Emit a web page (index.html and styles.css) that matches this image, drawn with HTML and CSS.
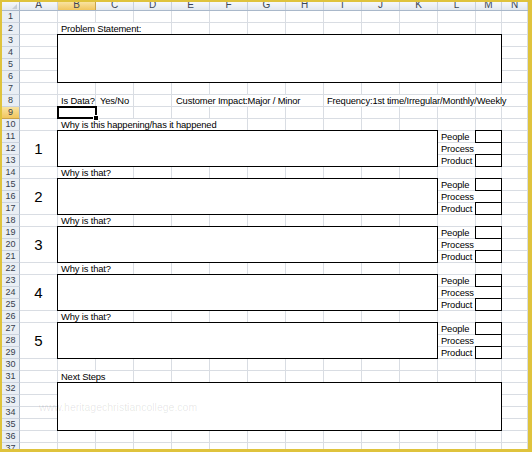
FILE: index.html
```html
<!DOCTYPE html>
<html lang="en">
<head>
    <meta charset="UTF-8">
    <title>5 Whys Worksheet</title>
    <link rel="stylesheet" href="styles.css">
</head>
<body>

<div class="frame">
    <!-- column headers -->
    <div class="colheads">
        <div class="corner"></div>
        <div class="ch">A</div>
        <div class="ch sel">B</div>
        <div class="ch">C</div>
        <div class="ch">D</div>
        <div class="ch">E</div>
        <div class="ch">F</div>
        <div class="ch">G</div>
        <div class="ch">H</div>
        <div class="ch">I</div>
        <div class="ch">J</div>
        <div class="ch">K</div>
        <div class="ch">L</div>
        <div class="ch narrow">M</div>
        <div class="ch narrow">N</div>
    </div>

    <div class="body">
        <!-- row headers -->
        <div class="rowheads">
            <div class="rh">1</div>
            <div class="rh">2</div>
            <div class="rh">3</div>
            <div class="rh">4</div>
            <div class="rh">5</div>
            <div class="rh">6</div>
            <div class="rh">7</div>
            <div class="rh">8</div>
            <div class="rh sel">9</div>
            <div class="rh">10</div>
            <div class="rh">11</div>
            <div class="rh">12</div>
            <div class="rh">13</div>
            <div class="rh">14</div>
            <div class="rh">15</div>
            <div class="rh">16</div>
            <div class="rh">17</div>
            <div class="rh">18</div>
            <div class="rh">19</div>
            <div class="rh">20</div>
            <div class="rh">21</div>
            <div class="rh">22</div>
            <div class="rh">23</div>
            <div class="rh">24</div>
            <div class="rh">25</div>
            <div class="rh">26</div>
            <div class="rh">27</div>
            <div class="rh">28</div>
            <div class="rh">29</div>
            <div class="rh">30</div>
            <div class="rh">31</div>
            <div class="rh">32</div>
            <div class="rh">33</div>
            <div class="rh">34</div>
            <div class="rh">35</div>
            <div class="rh">36</div>
            <div class="rh">37</div>
        </div>

        <div class="cells">
            <!-- rows 1-2 -->
            <div class="band rows-2">
                <div class="label ps-label">Problem Statement:</div>
            </div>

            <!-- rows 3-6 -->
            <div class="band rows-4">
                <div class="box box-full"></div>
            </div>

            <!-- rows 7-9 -->
            <div class="band rows-3">
                <div class="label meta is-data">Is Data?</div>
                <div class="label meta yes-no">Yes/No</div>
                <div class="label meta impact">Customer Impact:Major / Minor</div>
                <div class="label meta freq">Frequency:1st time/Irregular/Monthly/Weekly</div>
                <div class="active"></div>
            </div>

            <!-- rows 10-13 -->
            <div class="band why">
                <div class="label why-label first">Why is this happening/has it happened</div>
                <div class="num">1</div>
                <div class="box box-why"></div>
                <div class="label pp people">People</div>
                <div class="label pp process">Process</div>
                <div class="label pp product">Product</div>
                <div class="chk chk-top"></div>
                <div class="chk-mid"></div>
                <div class="chk chk-bottom"></div>
            </div>

            <!-- rows 14-17 -->
            <div class="band why">
                <div class="label why-label">Why is that?</div>
                <div class="num">2</div>
                <div class="box box-why"></div>
                <div class="label pp people">People</div>
                <div class="label pp process">Process</div>
                <div class="label pp product">Product</div>
                <div class="chk chk-top"></div>
                <div class="chk-mid"></div>
                <div class="chk chk-bottom"></div>
            </div>

            <!-- rows 18-21 -->
            <div class="band why">
                <div class="label why-label">Why is that?</div>
                <div class="num">3</div>
                <div class="box box-why"></div>
                <div class="label pp people">People</div>
                <div class="label pp process">Process</div>
                <div class="label pp product">Product</div>
                <div class="chk chk-top"></div>
                <div class="chk-mid"></div>
                <div class="chk chk-bottom"></div>
            </div>

            <!-- rows 22-25 -->
            <div class="band why">
                <div class="label why-label">Why is that?</div>
                <div class="num">4</div>
                <div class="box box-why"></div>
                <div class="label pp people">People</div>
                <div class="label pp process">Process</div>
                <div class="label pp product">Product</div>
                <div class="chk chk-top"></div>
                <div class="chk-mid"></div>
                <div class="chk chk-bottom"></div>
            </div>

            <!-- rows 26-29 -->
            <div class="band why">
                <div class="label why-label">Why is that?</div>
                <div class="num">5</div>
                <div class="box box-why"></div>
                <div class="label pp people">People</div>
                <div class="label pp process">Process</div>
                <div class="label pp product">Product</div>
                <div class="chk chk-top"></div>
                <div class="chk-mid"></div>
                <div class="chk chk-bottom"></div>
            </div>

            <!-- rows 30-37 -->
            <div class="band rows-8">
                <div class="label next-label">Next Steps</div>
                <div class="box box-next"></div>
            </div>
        </div>
    </div>

    <div class="watermark">www.heritagechristiancollege.com</div>
</div>

</body>
</html>
```

FILE: styles.css
```css
body {
    margin: 0;
    font-family: "Liberation Sans", Arial, sans-serif;
    background-color: #fff;
}
.frame {
    position: relative;
    width: 532px;
    height: 452px;
    box-sizing: border-box;
    border-style: solid;
    border-color: #dfc33c;
    border-width: 2px 4px 3px 2px;
    overflow: hidden;
    background-color: #fff;
}

/* headers */
.colheads {
    display: flex;
    height: 9px;
    box-sizing: border-box;
    border-bottom: 1px solid #a9b8ca;
    background: linear-gradient(#f6f8fa, #e3e8ee);
}
.corner {
    position: relative;
    width: 18px;
    box-sizing: border-box;
    border-right: 1px solid #a9b8ca;
}
.corner::after {
    content: "";
    position: absolute;
    right: 2px;
    bottom: 1px;
    border-style: solid;
    border-width: 0 0 5px 5px;
    border-color: transparent transparent #c8ced6 transparent;
}
.ch {
    width: 38px;
    flex: none;
    box-sizing: border-box;
    border-right: 1px solid #c9d1dc;
    display: flex;
    align-items: flex-end;
    justify-content: center;
    font-size: 10px;
    line-height: 10px;
    color: #3b4656;
}
.ch.narrow {
    width: 26px;
}
.ch.sel {
    background: linear-gradient(#f9e3a0, #f1c65e);
    border-right-color: #c9a24a;
}
.body {
    display: flex;
}
.rowheads {
    width: 18px;
    flex: none;
}
.rh {
    height: 12px;
    box-sizing: border-box;
    border-bottom: 1px solid #cbd3de;
    border-right: 1px solid #a9b8ca;
    background-color: #e9eef4;
    font-size: 9px;
    line-height: 11px;
    text-align: center;
    color: #36404d;
}
.rh.sel {
    background: linear-gradient(#f9e3a0, #f1c65e);
    border-bottom-color: #c9a24a;
}

/* cell area with gridlines */
.cells {
    width: 508px;
    flex: none;
    background-image:
        repeating-linear-gradient(to bottom, transparent 0 11px, #d9dde3 11px 12px),
        repeating-linear-gradient(to right, transparent 0 37px, #d9dde3 37px 38px),
        repeating-linear-gradient(to right, transparent 0 25px, #d9dde3 25px 26px);
    background-size: 100% 100%, 456px 100%, 52px 100%;
    background-position: 0 0, 0 0, 456px 0;
    background-repeat: no-repeat;
}
.band {
    display: grid;
    grid-template-columns: repeat(12, 38px) 26px 26px;
    grid-auto-rows: 12px;
}
.rows-2 { grid-template-rows: repeat(2, 12px); }
.rows-3 { grid-template-rows: repeat(3, 12px); }
.rows-4 { grid-template-rows: repeat(4, 12px); }
.why { grid-template-rows: repeat(4, 12px); }
.rows-8 { grid-template-rows: repeat(8, 12px); }

.label {
    display: flex;
    align-items: flex-end;
    margin: 0 1px 1px 0;
    padding-left: 3px;
    background-color: #fff;
    font-size: 9.4px;
    letter-spacing: -0.15px;
    line-height: 11px;
    white-space: nowrap;
    color: #000;
}
.ps-label { grid-row: 2; grid-column: 2 / 5; }
.meta { grid-row: 2; }
.is-data { grid-column: 2; }
.yes-no { grid-column: 3; padding-left: 4px; }
.impact { grid-column: 5 / 9; padding-left: 4px; }
.freq { grid-column: 9 / 15; }
.why-label { grid-row: 1; grid-column: 2 / 4; }
.why-label.first { grid-column: 2 / 7; }
.next-label { grid-row: 2; grid-column: 2 / 4; }

.box {
    margin: -1px 0 0 -1px;
    border: 1px solid #000;
    background-color: #fff;
}
.box-full { grid-row: 1 / 5; grid-column: 2 / 14; }
.box-why { grid-row: 2 / 5; grid-column: 2 / 12; }
.box-next { grid-row: 3 / 7; grid-column: 2 / 14; }

.num {
    grid-row: 2 / 5;
    grid-column: 1;
    margin: 0 1px 1px 0;
    background-color: #fff;
    display: flex;
    align-items: center;
    justify-content: center;
    font-size: 15px;
    color: #000;
}

.pp { grid-column: 12; }
.people { grid-row: 2; }
.process { grid-row: 3; grid-column: 12 / 14; }
.product { grid-row: 4; }
.chk {
    grid-column: 13;
    margin: -1px 0 0 -1px;
    border: 1px solid #000;
}
.chk-top { grid-row: 2; }
.chk-bottom { grid-row: 4; }
.chk-mid {
    grid-row: 3;
    grid-column: 13;
    border-right: 1px solid #000;
}

/* selected cell B9 */
.active {
    position: relative;
    grid-row: 3;
    grid-column: 2;
    margin: -1px -1px 0 -1px;
    border: 2px solid #000;
}
.active::after {
    content: "";
    position: absolute;
    right: -4px;
    bottom: -4px;
    width: 4px;
    height: 4px;
    background-color: #000;
    border: 1px solid #fff;
}

.watermark {
    position: absolute;
    left: 37px;
    top: 399px;
    font-size: 10.5px;
    color: rgba(0, 0, 0, 0.1);
    white-space: nowrap;
}
```
